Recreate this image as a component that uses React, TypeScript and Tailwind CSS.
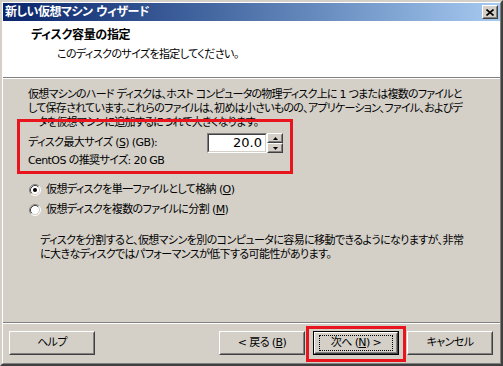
import type { FC, ReactNode } from 'react';

const font =
  "font-['DejaVu_Sans','Noto_Sans_CJK_JP',sans-serif] [font-feature-settings:'palt']";

const Raised: FC<{ className?: string; children?: ReactNode }> = ({
  className,
  children,
}) => (
  <div
    className={`flex border border-t-white border-l-white border-r-[#404040] border-b-[#404040] bg-[#d4d0c8] ${className ?? ''}`}
  >
    <div className="flex flex-1 items-center justify-center border border-t-[#d4d0c8] border-l-[#d4d0c8] border-r-[#808080] border-b-[#808080]">
      {children}
    </div>
  </div>
);

const Button: FC<{ children: ReactNode; isDefault?: boolean }> = ({
  children,
  isDefault,
}) => {
  if (isDefault) {
    return (
      <div className="flex h-[24px] w-[86px] border border-black">
        <Raised className="flex-1">
          <div className="flex h-[16px] w-[74px] items-center justify-center border border-dotted border-black">
            {children}
          </div>
        </Raised>
      </div>
    );
  }
  return <Raised className="h-[24px] w-[86px]">{children}</Raised>;
};

const Radio: FC<{ checked?: boolean }> = ({ checked }) => (
  <svg width="12" height="12" viewBox="0 0 12 12">
    <circle cx="6" cy="6" r="5" fill="white" />
    <path d="M2.11 9.89A5.5 5.5 0 0 1 9.89 2.11" stroke="#808080" fill="none" />
    <path d="M9.89 2.11A5.5 5.5 0 0 1 2.11 9.89" stroke="white" fill="none" />
    <path d="M2.82 9.18A4.5 4.5 0 0 1 9.18 2.82" stroke="#404040" fill="none" />
    <path d="M9.18 2.82A4.5 4.5 0 0 1 2.82 9.18" stroke="#d4d0c8" fill="none" />
    {checked && <circle cx="6" cy="6" r="2" fill="black" />}
  </svg>
);

const App: FC = () => {
  return (
    <div
      className={`relative h-[366px] w-[503px] border-2 border-t-[#d4d0c8] border-l-[#d4d0c8] border-r-[#404040] border-b-[#404040] text-[11px] leading-[14px] tracking-[-0.6px] text-black ${font}`}
    >
      <div className="flex h-full flex-col border border-t-white border-l-white border-r-[#808080] border-b-[#808080] bg-[#d4d0c8]">
        {/* title bar */}
        <div className="flex h-[18px] items-center justify-between bg-gradient-to-r from-[#0a246a] to-[#a6caf0] pr-[2px] pl-[2px]">
          <span className="text-[12px] font-bold tracking-[-0.5px] text-white">
            新しい仮想マシン ウィザード
          </span>
          <Raised className="h-[14px] w-[16px]">
            <svg width="8" height="7" viewBox="0 0 8 7">
              <path d="M0.5 0.5L7.5 6.5M7.5 0.5L0.5 6.5" stroke="black" strokeWidth="1.6" />
            </svg>
          </Raised>
        </div>

        {/* header */}
        <div className="h-[56px] bg-white pt-[7px] pl-[28px]">
          <div className="text-[12px] font-bold tracking-[-0.3px]">ディスク容量の指定</div>
          <div className="mt-[6px] pl-[26px]">
            このディスクのサイズを指定してください。
          </div>
        </div>
        <div className="h-px bg-[#808080]" />
        <div className="h-px bg-white" />

        {/* body */}
        <div className="flex-1 pt-[9px] pl-[25px]">
          <p className="whitespace-nowrap tracking-[-0.75px]">
            仮想マシンのハード ディスクは、ホスト コンピュータの物理ディスク上に 1 つまたは複数のファイルと
            <br />
            して保存されています。これらのファイルは、初めは小さいものの、アプリケーション、ファイル、およびデ
            <br />
            ータを仮想マシンに追加するにつれて大きくなります。
          </p>
          <div className="mt-[3px] flex h-[20px] items-center">
            <span className="w-[179px]">
              ディスク最大サイズ (<u>S</u>) (GB):
            </span>
            <div className="flex h-[20px] w-[60px] border border-t-[#808080] border-l-[#808080] border-r-white border-b-white">
              <div className="flex flex-1 items-center justify-end border border-t-[#404040] border-l-[#404040] border-r-[#d4d0c8] border-b-[#d4d0c8] bg-white pr-[3px] text-[13px] tracking-normal">
                20.0
              </div>
            </div>
            <div className="flex flex-col">
              <Raised className="h-[10px] w-[16px]">
                <svg width="5" height="3" viewBox="0 0 5 3">
                  <path d="M2.5 0L5 3H0Z" fill="black" />
                </svg>
              </Raised>
              <Raised className="h-[10px] w-[16px]">
                <svg width="5" height="3" viewBox="0 0 5 3">
                  <path d="M0 0H5L2.5 3Z" fill="black" />
                </svg>
              </Raised>
            </div>
          </div>
          <p className="mt-px">CentOS の推奨サイズ: 20 GB</p>

          <div className="mt-[14px] flex h-[16px] items-center gap-[5px] pl-px">
            <Radio checked />
            <span>
              仮想ディスクを単一ファイルとして格納 (<u>O</u>)
            </span>
          </div>
          <div className="mt-[4px] flex h-[16px] items-center gap-[5px] pl-px">
            <Radio />
            <span>
              仮想ディスクを複数のファイルに分割 (<u>M</u>)
            </span>
          </div>
          <p className="mt-[16px] pl-[12px] whitespace-nowrap">
            ディスクを分割すると、仮想マシンを別のコンピュータに容易に移動できるようになりますが、非常
            <br />
            に大きなディスクではパフォーマンスが低下する可能性があります。
          </p>
        </div>

        {/* footer */}
        <div className="h-px bg-[#808080]" />
        <div className="h-px bg-white" />
        <div className="flex h-[39px] items-start justify-between pt-[7px] pr-[7px] pl-[6px]">
          <Button>ヘルプ</Button>
          <div className="flex gap-[8px]">
            <Button>
              &lt; 戻る (<u>B</u>)
            </Button>
            <Button isDefault>
              次へ (<u>N</u>) &gt;
            </Button>
            <Button>キャンセル</Button>
          </div>
        </div>
      </div>

      {/* annotation boxes */}
      <div className="absolute top-[117px] left-[15px] h-[55px] w-[276px] border-[3px] border-[#e8141e]" />
      <div className="absolute top-[324px] left-[304px] h-[36px] w-[100px] border-[3px] border-[#e8141e]" />
    </div>
  );
};

export default App;
